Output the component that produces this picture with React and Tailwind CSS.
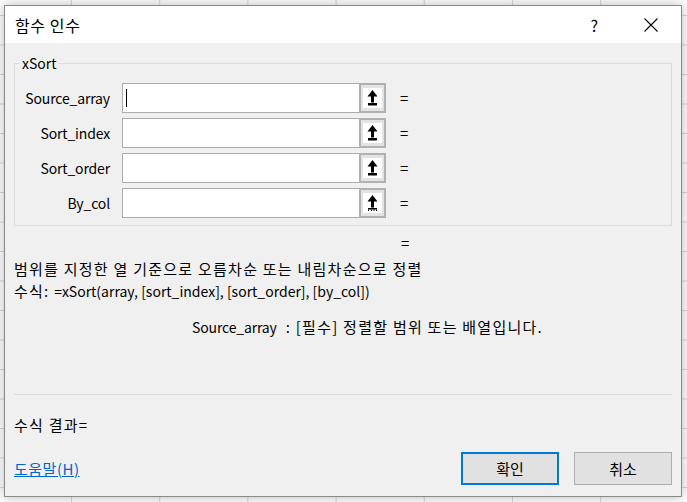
import React from "react";

function RefIcon({ dashed }) {
  return (
    <svg width="19" height="20" viewBox="0 0 19 20" className="block">
      <rect x="0" y="0" width="19" height="20" fill="#ffffff" />
      <polygon points="9.5,2 14.5,8.5 4.5,8.5" fill="#000" />
      <rect x="8" y="8" width="3" height="6.5" fill="#000" />
      {dashed ? (
        <g fill="#000">
          <rect x="5" y="15" width="9" height="1.5" />
          <rect x="5" y="16.5" width="1" height="1.5" />
          <rect x="8" y="16.5" width="1" height="1.5" />
          <rect x="10.5" y="16.5" width="1" height="1.5" />
          <rect x="13" y="16.5" width="1" height="1.5" />
        </g>
      ) : (
        <rect x="5" y="15" width="9" height="2.5" fill="#000" />
      )}
    </svg>
  );
}

function K({ children }) {
  return <span className="text-[15px] tracking-[1.25px]">{children}</span>;
}

function ArgRow({ label, cursor, dashed }) {
  return (
    <div className="flex items-center h-[30px]">
      <div className="w-[95px] text-right whitespace-nowrap tracking-[-0.15px]">{label}</div>
      <div className="ml-[12px] w-[237px] h-[30px] bg-white border border-[#acacac] border-r-0 flex items-center">
        {cursor ? <div className="ml-[3px] w-[1px] h-[18px] bg-black" /> : null}
      </div>
      <div className="w-[27px] h-[30px] border-2 border-[#b1b1b1] bg-[#e3e3e3] flex items-center justify-center">
        <RefIcon dashed={dashed} />
      </div>
      <div className="ml-[14px] text-[15px]">=</div>
    </div>
  );
}

export default function App() {
  return (
    <div className="w-[687px] h-[502px] overflow-hidden bg-white pt-[5px] pl-[4px] [background-image:linear-gradient(to_right,#d6d6d6_1px,transparent_1px),linear-gradient(to_bottom,#d6d6d6_1px,transparent_1px)] [background-size:88.2px_29.5px] [background-position:71px_15px] font-['Noto_Sans_CJK_KR',sans-serif] text-[14px] leading-[22px] text-black">
      <div className="w-[678px] h-[492px] border border-[#8a8a8a] bg-[#f0f0f0] shadow-[0_0_12px_rgba(0,0,0,0.28)] flex flex-col">
        <div className="h-[37px] bg-white flex items-center pl-[10px] shrink-0">
          <div className="text-[16px] tracking-[0.6px]">함수 인수</div>
          <div className="ml-auto mr-[46px] text-[16px]">?</div>
          <svg width="14" height="14" viewBox="0 0 14 14" className="mr-[23px]">
            <path d="M0.5 0.5 L13.5 13.5 M13.5 0.5 L0.5 13.5" stroke="#000" strokeWidth="1.1" fill="none" />
          </svg>
        </div>
        <div className="flex flex-col px-[9px] pt-[20px] pb-[11px]">
          <div className="relative h-[163px] border border-[#dcdcdc] pt-[19px] flex flex-col gap-[5px]">
            <div className="absolute left-[5px] top-[-12px] px-[2px] bg-[#f0f0f0] leading-[22px]">xSort</div>
            <ArgRow label="Source_array" cursor />
            <ArgRow label="Sort_index" />
            <ArgRow label="Sort_order" />
            <ArgRow label="By_col" dashed />
          </div>
          <div className="mt-[6px] h-[22px] pl-[387px] text-[15px]">=</div>
          <div className="mt-[4px]">
            <div className="h-[22px]"><K>범위를 지정한 열 기준으로 오름차순 또는 내림차순으로 정렬</K></div>
            <div className="h-[22px]"><K>수식: </K>=xSort(array, [sort_index], [sort_order], [by_col])</div>
          </div>
          <div className="mt-[14px] pl-[178px] flex h-[22px]">
            <span className="tracking-[-0.15px]">Source_array</span>
            <span className="ml-[9px] tracking-[-0.2px]"><K>: [필수] 정렬할 범위 또는 배열입니다.</K></span>
          </div>
          <div className="mt-[56px] h-[1px] bg-[#dadada]" />
          <div className="mt-[19px] h-[22px]"><K>수식 결과=</K></div>
          <div className="mt-[16px] flex items-center">
            <a href="#" className="text-[#0066cc] underline text-[15px] tracking-[0.5px]">도움말(H)</a>
            <button className="ml-auto w-[98px] h-[33px] border-2 border-[#0078d7] bg-[#e1e1e1] text-[15px]">확인</button>
            <button className="ml-[15px] w-[98px] h-[33px] border border-[#adadad] bg-[#e1e1e1] text-[15px]">취소</button>
          </div>
        </div>
      </div>
    </div>
  );
}
